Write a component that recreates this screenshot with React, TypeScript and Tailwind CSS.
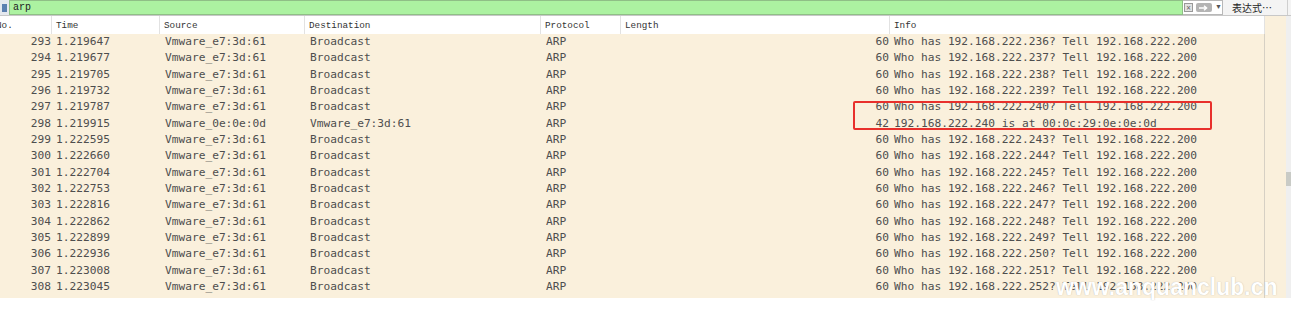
import React from "react";

type Packet = {
  no: number;
  time: string;
  src: string;
  dst: string;
  proto: string;
  len: number;
  info: string;
};

const who = (n: number) => `Who has 192.168.222.${n}? Tell 192.168.222.200`;

const packets: Packet[] = [
  { no: 293, time: "1.219647", src: "Vmware_e7:3d:61", dst: "Broadcast", proto: "ARP", len: 60, info: who(236) },
  { no: 294, time: "1.219677", src: "Vmware_e7:3d:61", dst: "Broadcast", proto: "ARP", len: 60, info: who(237) },
  { no: 295, time: "1.219705", src: "Vmware_e7:3d:61", dst: "Broadcast", proto: "ARP", len: 60, info: who(238) },
  { no: 296, time: "1.219732", src: "Vmware_e7:3d:61", dst: "Broadcast", proto: "ARP", len: 60, info: who(239) },
  { no: 297, time: "1.219787", src: "Vmware_e7:3d:61", dst: "Broadcast", proto: "ARP", len: 60, info: who(240) },
  { no: 298, time: "1.219915", src: "Vmware_0e:0e:0d", dst: "Vmware_e7:3d:61", proto: "ARP", len: 42, info: "192.168.222.240 is at 00:0c:29:0e:0e:0d" },
  { no: 299, time: "1.222595", src: "Vmware_e7:3d:61", dst: "Broadcast", proto: "ARP", len: 60, info: who(243) },
  { no: 300, time: "1.222660", src: "Vmware_e7:3d:61", dst: "Broadcast", proto: "ARP", len: 60, info: who(244) },
  { no: 301, time: "1.222704", src: "Vmware_e7:3d:61", dst: "Broadcast", proto: "ARP", len: 60, info: who(245) },
  { no: 302, time: "1.222753", src: "Vmware_e7:3d:61", dst: "Broadcast", proto: "ARP", len: 60, info: who(246) },
  { no: 303, time: "1.222816", src: "Vmware_e7:3d:61", dst: "Broadcast", proto: "ARP", len: 60, info: who(247) },
  { no: 304, time: "1.222862", src: "Vmware_e7:3d:61", dst: "Broadcast", proto: "ARP", len: 60, info: who(248) },
  { no: 305, time: "1.222899", src: "Vmware_e7:3d:61", dst: "Broadcast", proto: "ARP", len: 60, info: who(249) },
  { no: 306, time: "1.222936", src: "Vmware_e7:3d:61", dst: "Broadcast", proto: "ARP", len: 60, info: who(250) },
  { no: 307, time: "1.223008", src: "Vmware_e7:3d:61", dst: "Broadcast", proto: "ARP", len: 60, info: who(251) },
  { no: 308, time: "1.223045", src: "Vmware_e7:3d:61", dst: "Broadcast", proto: "ARP", len: 60, info: who(252) },
  { no: 309, time: "1.223081", src: "Vmware_e7:3d:61", dst: "Broadcast", proto: "ARP", len: 60, info: who(253) },
];

const cols = "grid grid-cols-[52px_108px_145px_236px_80px_269px_375px]";

const FilterBar = () => (
  <div className="flex h-[16px] items-stretch border-b border-[#c8c8c8] bg-white">
    <div className="flex w-[9px] items-center justify-center bg-[#e4e8ee]">
      <div className="h-[8px] w-[5px] bg-[#5a7fb0]" />
    </div>
    <div className="flex flex-1 items-center border border-[#8fbf86] bg-[#acf2a1] pl-[3px] font-['Liberation_Mono',monospace] text-[10px] text-[#222]">
      arp
    </div>
    <div className="flex w-[40px] items-center gap-[3px] border-y border-r border-[#b8b8b8] bg-white pl-[1px]">
      <div className="flex h-[9px] w-[9px] items-center justify-center border border-[#999] bg-[#e2e2e2] text-[8px] leading-none text-[#666]">
        ×
      </div>
      <div className="flex h-[9px] w-[16px] items-center justify-center rounded-[2px] bg-[#b4b4b4]">
        <svg width="10" height="6" viewBox="0 0 10 6">
          <path d="M0 3h7M5 0.8l2.6 2.2L5 5.2" stroke="#fff" strokeWidth="1.4" fill="none" />
        </svg>
      </div>
      <span className="text-[7px] text-[#555]">▼</span>
    </div>
    <div className="flex w-[64px] items-center bg-[#f4f4f4] pl-[9px] font-['Noto_Sans_CJK_SC',sans-serif] text-[10px] text-[#222]">
      表达式…
    </div>
    <div className="w-[4px] border-l border-[#cfcfcf] bg-[#f4f4f4]" />
  </div>
);

const Header = () => {
  const labels = ["No.", "Time", "Source", "Destination", "Protocol", "Length", "Info"];
  return (
    <div className="flex h-[18px]">
      <div className={`${cols} bg-white font-['Liberation_Mono',monospace] text-[9.3px] text-[#333]`}>
        {labels.map((l, i) => (
          <div
            key={l}
            className={`flex items-center border-r border-[#e2e2e2] pt-[2px] ${i === 0 ? "-ml-[4px]" : "pl-[4px]"}`}
          >
            {l}
          </div>
        ))}
      </div>
      <div className="w-[21px] bg-[#faf0dc]" />
      <div className="w-[5px] bg-[#efefef]" />
    </div>
  );
};

const Row = ({ p }: { p: Packet }) => (
  <div className={`${cols} h-[16.33px] items-center whitespace-nowrap`}>
    <div className="pr-[1px] text-right">{p.no}</div>
    <div className="pl-[4px]">{p.time}</div>
    <div className="pl-[5px]">{p.src}</div>
    <div className="pl-[5px]">{p.dst}</div>
    <div className="pl-[5px]">{p.proto}</div>
    <div className="pr-[1px] text-right">{p.len}</div>
    <div className="pl-[4px]">{p.info}</div>
  </div>
);

export default function App() {
  return (
    <div className="relative h-[311px] w-[1291px] overflow-hidden bg-white">
      <FilterBar />
      <Header />
      <div className="flex h-[264px]">
        <div className="w-[1265px] overflow-hidden border-r border-[#d6d0c4] bg-[#faf0dc] font-['DejaVu_Sans_Mono',monospace] text-[11.2px] text-[#4e4e4e]">
          {packets.map((p) => (
            <Row key={p.no} p={p} />
          ))}
        </div>
        <div className="w-[21px] bg-[#faf0dc]" />
        <div className="flex w-[5px] flex-col bg-[#efefef] pt-[138px]">
          <div className="h-[14px] w-full bg-[#c9cbc6]" />
        </div>
      </div>

      <div className="pointer-events-none absolute left-[853px] top-[101px] h-[29px] w-[359px] rounded-[2px] border-2 border-[#e8302c]" />

      <div className="pointer-events-none absolute left-[1056px] top-[273px] font-['Liberation_Sans',sans-serif] text-[23px] font-bold leading-[28px] text-white [text-shadow:0_0_1px_rgba(110,110,110,0.5)]">
        www.anquanclub.cn
      </div>
    </div>
  );
}
